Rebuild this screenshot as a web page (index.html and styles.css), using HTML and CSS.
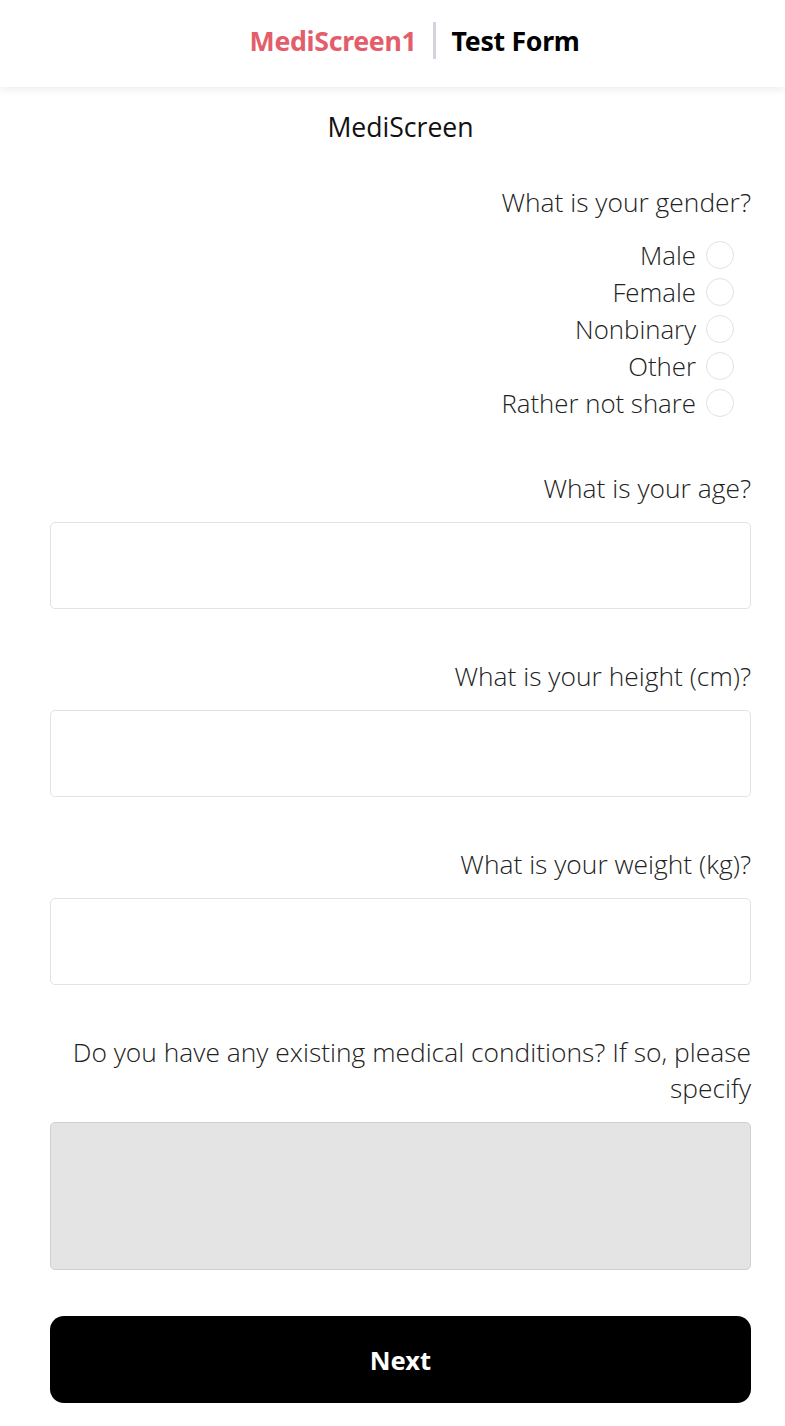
FILE: index.html
```html
<!DOCTYPE html>
<html lang="en">
<head>
<meta charset="utf-8">
<title>MediScreen1 | Test Form</title>
<link rel="stylesheet" href="styles.css">
</head>
<body>
<header class="topbar">
  <span class="brand">MediScreen1</span>
  <span class="divider"></span>
  <span class="page-title">Test Form</span>
</header>
<main class="form">
  <h1 class="form-title">MediScreen</h1>

  <section class="field">
    <div class="label">What is your gender?</div>
    <div class="radios">
      <label class="radio-row"><span>Male</span><span class="radio"></span></label>
      <label class="radio-row"><span>Female</span><span class="radio"></span></label>
      <label class="radio-row"><span>Nonbinary</span><span class="radio"></span></label>
      <label class="radio-row"><span>Other</span><span class="radio"></span></label>
      <label class="radio-row"><span>Rather not share</span><span class="radio"></span></label>
    </div>
  </section>

  <section class="field">
    <div class="label">What is your age?</div>
    <div class="input"></div>
  </section>

  <section class="field">
    <div class="label">What is your height (cm)?</div>
    <div class="input"></div>
  </section>

  <section class="field">
    <div class="label">What is your weight (kg)?</div>
    <div class="input"></div>
  </section>

  <section class="field">
    <div class="label">Do you have any existing medical conditions? If so, please specify</div>
    <div class="textarea"></div>
  </section>

  <button class="next-btn">Next</button>
</main>
</body>
</html>
```

FILE: styles.css
```css
* { box-sizing: border-box; }
html, body { margin: 0; padding: 0; background: #fff; }
body { font-family: "Open Sans", "Noto Sans", sans-serif; color: #222; }

.topbar {
  height: 87px;
  display: flex;
  align-items: center;
  justify-content: center;
  gap: 16px;
  padding: 0 0 6px 44px;
  background: #fff;
  box-shadow: 0 3px 8px rgba(0, 0, 0, 0.07);
  position: relative;
}
.brand { color: #e35d6a; font-weight: 700; font-size: 26.7px; font-family: "Noto Sans", sans-serif; letter-spacing: -0.3px; }
.divider { width: 3px; height: 37px; background: #d2d5de; }
.page-title { color: #000; font-weight: 700; font-size: 26.7px; font-family: "Noto Sans", sans-serif; letter-spacing: -0.3px; }

.form { padding: 22px 34px 40px 50px; }
.form-title {
  margin: 0;
  text-align: center;
  font-weight: 400;
  font-size: 26.6px;
  line-height: 36px;
  color: #111;
}

.field { margin-top: 39px; }
.field + .field { margin-top: 49px; }
.label {
  text-align: right;
  font-weight: 300;
  font-size: 26.4px;
  line-height: 36px;
  color: #222;
  margin-bottom: 16px;
  padding-left: 20px;
}
.radios { margin-top: 16px; display: flex; flex-direction: column; align-items: flex-end; padding-right: 17px; }
.radio-row {
  height: 37px;
  display: flex;
  align-items: center;
  gap: 10px;
  font-weight: 300;
  font-size: 25.8px;
  color: #222;
}
.radio {
  width: 28px;
  height: 28px;
  border-radius: 50%;
  border: 1px solid #e2e2e2;
  background: #fff;
}
.input {
  height: 87px;
  border: 1px solid #e3e3e3;
  border-radius: 5px;
  background: #fff;
}
.textarea {
  height: 148px;
  border: 1px solid #cfcfcf;
  border-radius: 5px;
  background: #e4e4e4;
}
.next-btn {
  display: block;
  width: 100%;
  margin-top: 46px;
  height: 87px;
  background: #000;
  color: #fff;
  border: none;
  border-radius: 14px;
  font-family: "Noto Sans", sans-serif;
  font-weight: 700;
  font-size: 25.5px;
}
```
